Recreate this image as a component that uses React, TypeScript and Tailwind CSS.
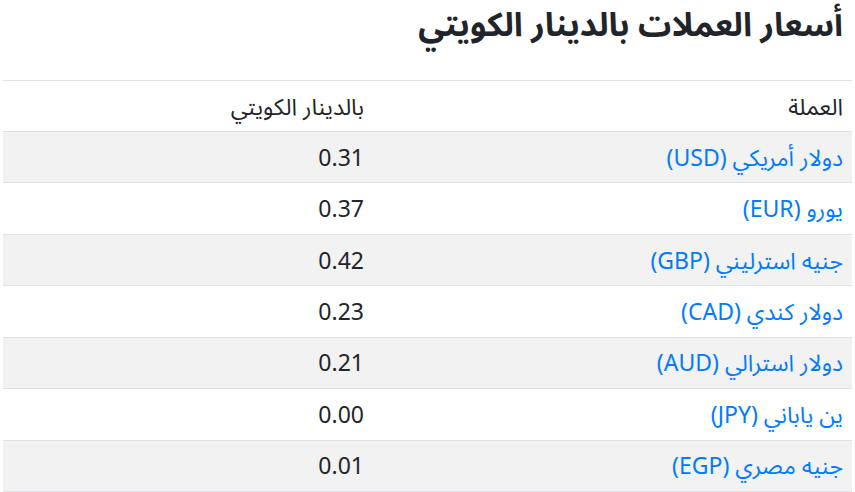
import React from "react";

const rows: [string, string][] = [
  ["دولار أمريكي (USD)", "0.31"],
  ["يورو (EUR)", "0.37"],
  ["جنيه استرليني (GBP)", "0.42"],
  ["دولار كندي (CAD)", "0.23"],
  ["دولار استرالي (AUD)", "0.21"],
  ["ين ياباني (JPY)", "0.00"],
  ["جنيه مصري (EGP)", "0.01"],
];

export default function App() {
  return (
    <div
      dir="rtl"
      className="bg-white text-[#212529] pr-[3px] pl-[3px]"
      style={{ fontFamily: '"Noto Sans Arabic", "Noto Sans", "Open Sans", "DejaVu Sans", sans-serif' }}
    >
      <h1 className="text-[33px] font-bold leading-[48px] pt-0 mt-[2px] pr-[9px] mb-[30px]">
        أسعار العملات بالدينار الكويتي
      </h1>
      <table className="w-[849px] border-collapse text-[23px] leading-[1.3]">
        <thead>
          <tr className="border-t border-b border-[#dee2e6] h-[51px]">
            <th className="w-[478px] text-right font-normal pr-[9px] pt-[3px] pb-0 align-middle">العملة</th>
            <th className="text-right font-normal pr-[10px] pt-[3px] pb-0 align-middle">بالدينار الكويتي</th>
          </tr>
        </thead>
        <tbody>
          {rows.map(([name, val], i) => (
            <tr
              key={name}
              className={`border-b border-[#dee2e6] h-[51.43px] ${i % 2 === 0 ? "bg-[#f2f2f2]" : "bg-white"}`}
            >
              <td className="pr-[9px] pt-[3px] pb-0 align-middle text-[#007bff]">{name}</td>
              <td className="pr-[10px] pt-[3px] pb-0 align-middle">{val}</td>
            </tr>
          ))}
        </tbody>
      </table>
    </div>
  );
}
